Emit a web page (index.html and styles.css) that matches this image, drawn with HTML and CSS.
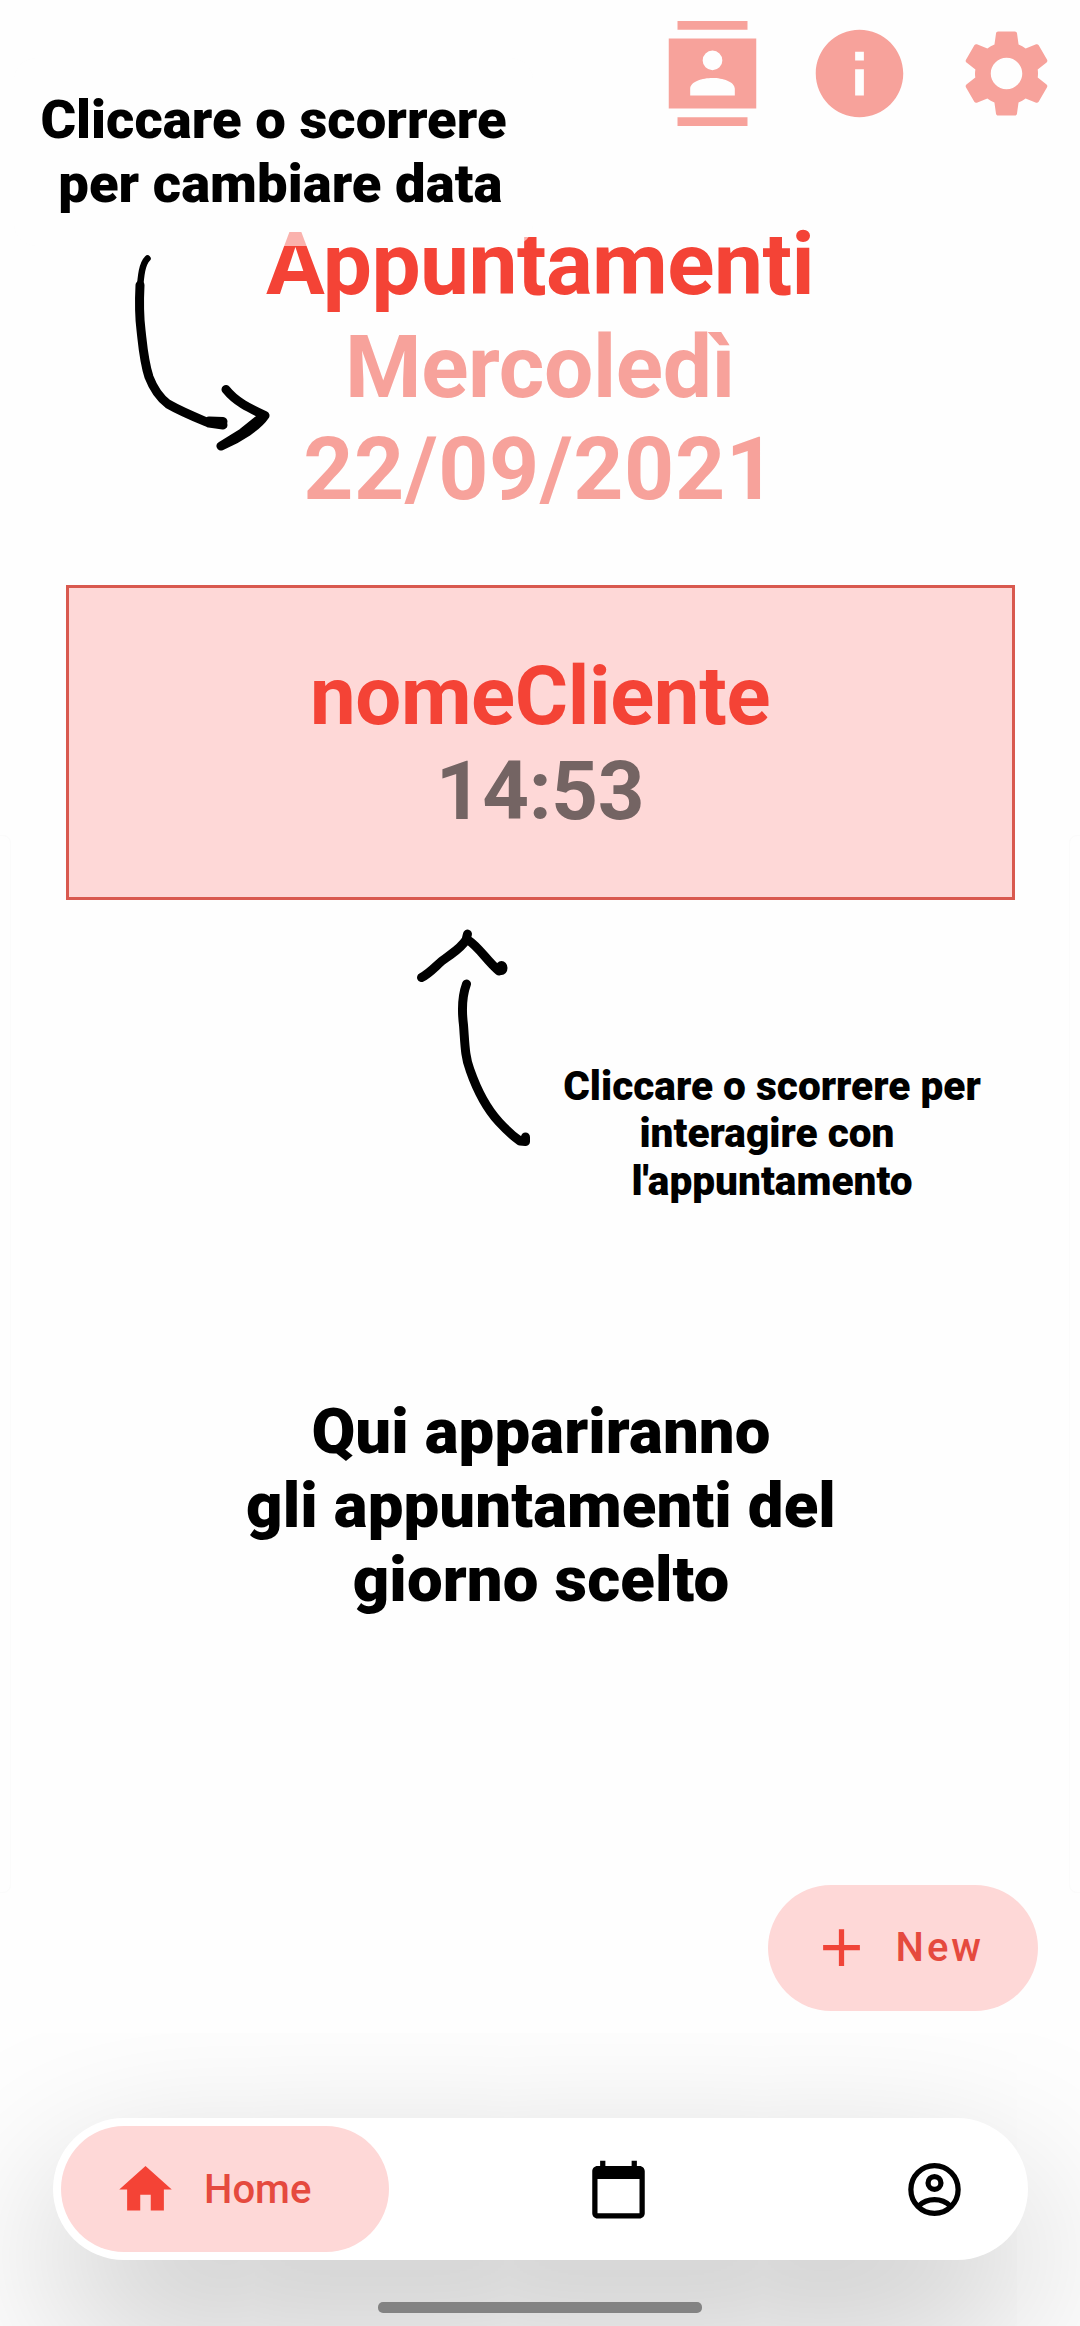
FILE: index.html
```
<!DOCTYPE html>
<html lang="it">
<head>
<meta charset="utf-8">
<title>Appuntamenti</title>
<link rel="stylesheet" href="styles.css">
</head>
<body>
<div class="screen">
  <header class="toolbar">
    <svg class="tool-icon" viewBox="0 0 24 24"><path fill-rule="evenodd" d="M4 0h16v2H4zM4 22h16v2H4zM2 4h20v16H2zM12 6.75a2.25 2.25 0 1 1 0 4.5 2.25 2.25 0 0 1 0-4.5zM17.100 17H6.900v-1.500C6.900 13.800 9.700 13 12 13s5.100.8 5.100 2.500z"/></svg>
    <svg class="tool-icon" viewBox="0 0 24 24"><path d="M12 2C6.48 2 2 6.48 2 12s4.48 10 10 10 10-4.48 10-10S17.52 2 12 2zm1 15h-2v-6h2v6zm0-8h-2V7h2v2z"/></svg>
    <svg class="tool-icon" viewBox="0 0 24 24"><path d="M19.14 12.94c.04-.3.06-.61.06-.94 0-.32-.02-.64-.07-.94l2.03-1.58c.18-.14.23-.41.12-.61l-1.92-3.32c-.12-.22-.37-.29-.59-.22l-2.39.96c-.5-.38-1.03-.7-1.62-.94l-.36-2.54c-.04-.24-.24-.41-.48-.41h-3.84c-.24 0-.43.17-.47.41l-.36 2.54c-.59.24-1.13.57-1.62.94l-2.39-.96c-.22-.08-.47 0-.59.22L2.74 8.87c-.12.21-.08.47.12.61l2.03 1.58c-.05.3-.09.63-.09.94s.02.64.07.94l-2.03 1.58c-.18.14-.23.41-.12.61l1.92 3.32c.12.22.37.29.59.22l2.39-.96c.5.38 1.03.7 1.62.94l.36 2.54c.05.24.24.41.48.41h3.84c.24 0 .44-.17.47-.41l.36-2.54c.59-.24 1.13-.56 1.62-.94l2.39.96c.22.08.47 0 .59-.22l1.92-3.32c.12-.22.07-.47-.12-.61l-2.01-1.58zM12 15.6c-1.98 0-3.6-1.62-3.6-3.6s1.62-3.6 3.6-3.6 3.6 1.62 3.6 3.6-1.62 3.6-3.6 3.6z"/></svg>
  </header>

  <h1 class="heading">
    <span class="heading-title">Appuntamenti</span>
    <span class="heading-day">Mercoledì</span>
    <span class="heading-date">22/09/2021</span>
  </h1>

  <section class="card">
    <span class="card-name">nomeCliente</span>
    <span class="card-time">14:53</span>
  </section>

  <p class="empty">Qui appariranno
gli appuntamenti del
giorno scelto</p>

  <button class="fab">
    <svg class="icon" viewBox="0 0 24 24"><path d="M19 13h-6v6h-2v-6H5v-2h6V5h2v6h6v2z"/></svg>
    <span>New</span>
  </button>

  <nav class="nav">
    <a class="nav-home">
      <svg class="icon" viewBox="0 0 24 24"><path d="M10 20v-6h4v6h5v-8h3L12 3 2 12h3v8z"/></svg>
      <span>Home</span>
    </a>
    <svg class="icon nav-calendar" viewBox="0 0 24 24"><path d="M20 3h-1V1h-2v2H7V1H5v2H4c-1.1 0-2 .9-2 2v16c0 1.1.9 2 2 2h16c1.1 0 2-.9 2-2V5c0-1.1-.9-2-2-2zm0 18H4V8h16v13z"/></svg>
    <svg class="icon" viewBox="0 0 24 24"><g fill="none" stroke="#000" stroke-width="2"><ellipse cx="12" cy="12" rx="9" ry="9.1"/><circle cx="12" cy="9.5" r="2.45"/><path d="M5.8 18.4C7.3 17 9.6 15.9 12 15.9s4.7 1.1 6.2 2.5"/></g></svg>
  </nav>

  <div class="gesture-bar"></div>

  <div class="edge edge-left"></div>
  <div class="edge edge-right"></div>

  <p class="hint hint-date">Cliccare o scorrere
 per cambiare data</p>
  <svg class="arrow arrow-date" viewBox="130 250 150 205">
    <path class="ink ink-thin" d="M147.500 258.500C142 264 141 275 139.500 292"/>
    <path class="ink" d="M140 285C139 305 140 322 141 330C143 348 144 362 149 377C154 390 160 398 168 404C182 412 197 418 209 423L223 425"/>
    <path class="ink" d="M209 421L223 421.500"/>
    <path class="ink" d="M226 389.500C236 402 249 408 265 415.500C258 426 240 438 221 446L242 433L262 417"/>
  </svg>
  <p class="hint hint-card">Cliccare o scorrere per
interagire con 
l'appuntamento</p>
  <svg class="arrow arrow-card" viewBox="412 922 120 228">
    <path class="ink" d="M421.500 977.500C432 972 438 963 446 958C454 952 461 948 466 940L467.500 934M468 940C479 947 487 961 499 971"/>
    <path class="ink" d="M466.500 984C461 999 462 1013 463.500 1025C465 1045 465 1057 470 1070C477 1090 487 1109 499 1122Q510 1134 520 1141L525.500 1141.500L525.500 1137"/>
    <ellipse cx="501.500" cy="968" rx="6" ry="7"/>
  </svg>
</div>
</body>
</html>
```
FILE: styles.css
```
* { box-sizing: border-box; }

body {
  margin: 0;
  background: #fefefe;
  font-family: Roboto, sans-serif;
}

.screen {
  position: relative;
  display: flex;
  flex-direction: column;
  height: 2326px;
  overflow: hidden;
}

.toolbar {
  display: flex;
  justify-content: flex-end;
  gap: 42px;
  padding: 21px 21px 0 0;
}

.tool-icon {
  width: 105px;
  height: 105px;
  fill: #f7a29b;
}

.heading {
  display: flex;
  flex-direction: column;
  align-items: center;
  margin: 87px 0 0;
  color: #f7a29b;
  font-size: 87.5px;
  font-weight: 700;
  line-height: 102.5px;
}

.heading-title {
  color: #f44336;
  letter-spacing: -0.6px;
}

.heading-day { letter-spacing: -0.4px; }
.heading-date { letter-spacing: 0.7px; }

.card {
  display: flex;
  flex-direction: column;
  align-items: center;
  width: 949px;
  height: 315px;
  margin: 64.5px auto 0;
  padding-top: 61px;
  border: 3px solid #d9594f;
  background: #fed8d7;
  color: #746463;
  font-size: 81.5px;
  font-weight: 700;
  line-height: 95.3px;
}

.card-name { color: #f44336; letter-spacing: -0.35px; }
.card-time { letter-spacing: -0.3px; }

.empty {
  margin: 494.5px 0 0 2px;
  font-size: 63.5px;
  font-weight: 900;
  line-height: 74.2px;
  letter-spacing: 0.1px;
  text-align: center;
  white-space: pre;
}

.icon {
  width: 63px;
  height: 63px;
  flex: none;
}

.fab {
  display: flex;
  align-items: center;
  align-self: flex-end;
  gap: 23px;
  width: 270px;
  height: 126px;
  margin: 267.5px 42px 0 0;
  padding: 0 0 0 41.5px;
  border: 0;
  border-radius: 63px;
  background: #fed8d7;
  color: #e54a3e;
  fill: #f04438;
  font: 500 40px/48px Roboto, sans-serif;
  letter-spacing: 3px;
}

.nav {
  display: flex;
  align-items: center;
  width: 975px;
  height: 141.500px;
  margin: 107.500px auto 0;
  padding: 1px 62px 0 8px;
  border-radius: 71px;
  background: #fff;
  box-shadow: 0 66px 170px rgba(0, 0, 0, 0.25);
}

.nav-home {
  display: flex;
  align-items: center;
  gap: 27px;
  width: 328px;
  height: 126px;
  padding-left: 53.500px;
  border-radius: 63px;
  background: #fed8d7;
  color: #e54a3e;
  fill: #f44336;
  font-size: 40px;
  font-weight: 500;
}

.nav-calendar { margin: 0 auto 0 198.500px; }

.gesture-bar {
  position: relative;
  width: 324px;
  height: 11px;
  margin: 42px auto 0;
  border-radius: 5px;
  background: #838383;
}

.edge {
  position: absolute;
  top: 835px;
  width: 21px;
  height: 1058px;
  border: 1px solid #fbfbfb;
  border-radius: 8px;
}

.edge-left { left: -10px; }
.edge-right { right: -10px; }

.hint {
  position: absolute;
  margin: 0;
  font-weight: 900;
  text-align: center;
  white-space: pre;
}

.hint-date {
  left: 14px;
  top: 58px;
  width: 519px;
  height: 188px;
  padding-top: 30px;
  border-radius: 22px;
  background: rgba(254, 254, 254, 0.6);
  font-size: 54.4px;
  line-height: 63.8px;
  letter-spacing: 0.05px;
}

.hint-card {
  left: 540px;
  top: 1062.500px;
  width: 464px;
  font-size: 40.600px;
  line-height: 47.500px;
}

.arrow { position: absolute; }
.arrow-date { left: 130px; top: 250px; width: 150px; height: 205px; }
.arrow-card { left: 412px; top: 922px; width: 120px; height: 228px; }

.ink {
  fill: none;
  stroke: #000;
  stroke-width: 9px;
  stroke-linecap: round;
  stroke-linejoin: round;
}

.ink-thin { stroke-width: 6.500px; }
```
